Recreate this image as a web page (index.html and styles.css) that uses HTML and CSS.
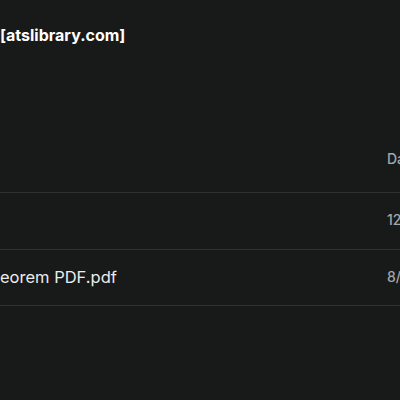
FILE: index.html
```html
<!DOCTYPE html>
<html lang="en">
<head>
    <meta charset="UTF-8">
    <meta name="viewport" content="width=device-width, initial-scale=1.0">
    <title>atslibrary.com</title>
    <link rel="stylesheet" href="styles.css">
</head>
<body>
    <div class="page">
        <div class="title">[atslibrary.com]</div>

        <div class="files">
            <div class="row head">
                <div class="cell name"></div>
                <div class="cell date">Date modified</div>
            </div>
            <div class="row">
                <div class="cell name"></div>
                <div class="cell date">12/05/2023</div>
            </div>
            <div class="row">
                <div class="cell name">eorem PDF.pdf</div>
                <div class="cell date">8/21/2023</div>
            </div>
        </div>
    </div>
</body>
</html>
```

FILE: styles.css
```css
body {
    margin: 0;
    background-color: #181a19;
    color: #e6e6e6;
    font-family: 'Inter', 'Noto Sans', sans-serif;
    overflow: hidden;
}
.page {
    width: 400px;
}
.title {
    padding-top: 24px;
    font-size: 16px;
    line-height: 22px;
    font-weight: 700;
    color: #ffffff;
    white-space: nowrap;
}
.files {
    margin-top: 103px;
}
.row {
    display: grid;
    grid-template-columns: 387px 200px;
    border-bottom: 1px solid #2f3130;
}
.cell {
    padding: 17px 0 18.5px;
    line-height: 20px;
    white-space: nowrap;
}
.name {
    font-size: 16.5px;
    color: #ececec;
}
.date {
    font-size: 14px;
    font-weight: 500;
    color: #a2a7ac;
}
.head .cell {
    padding: 0 0 23px;
}
```
